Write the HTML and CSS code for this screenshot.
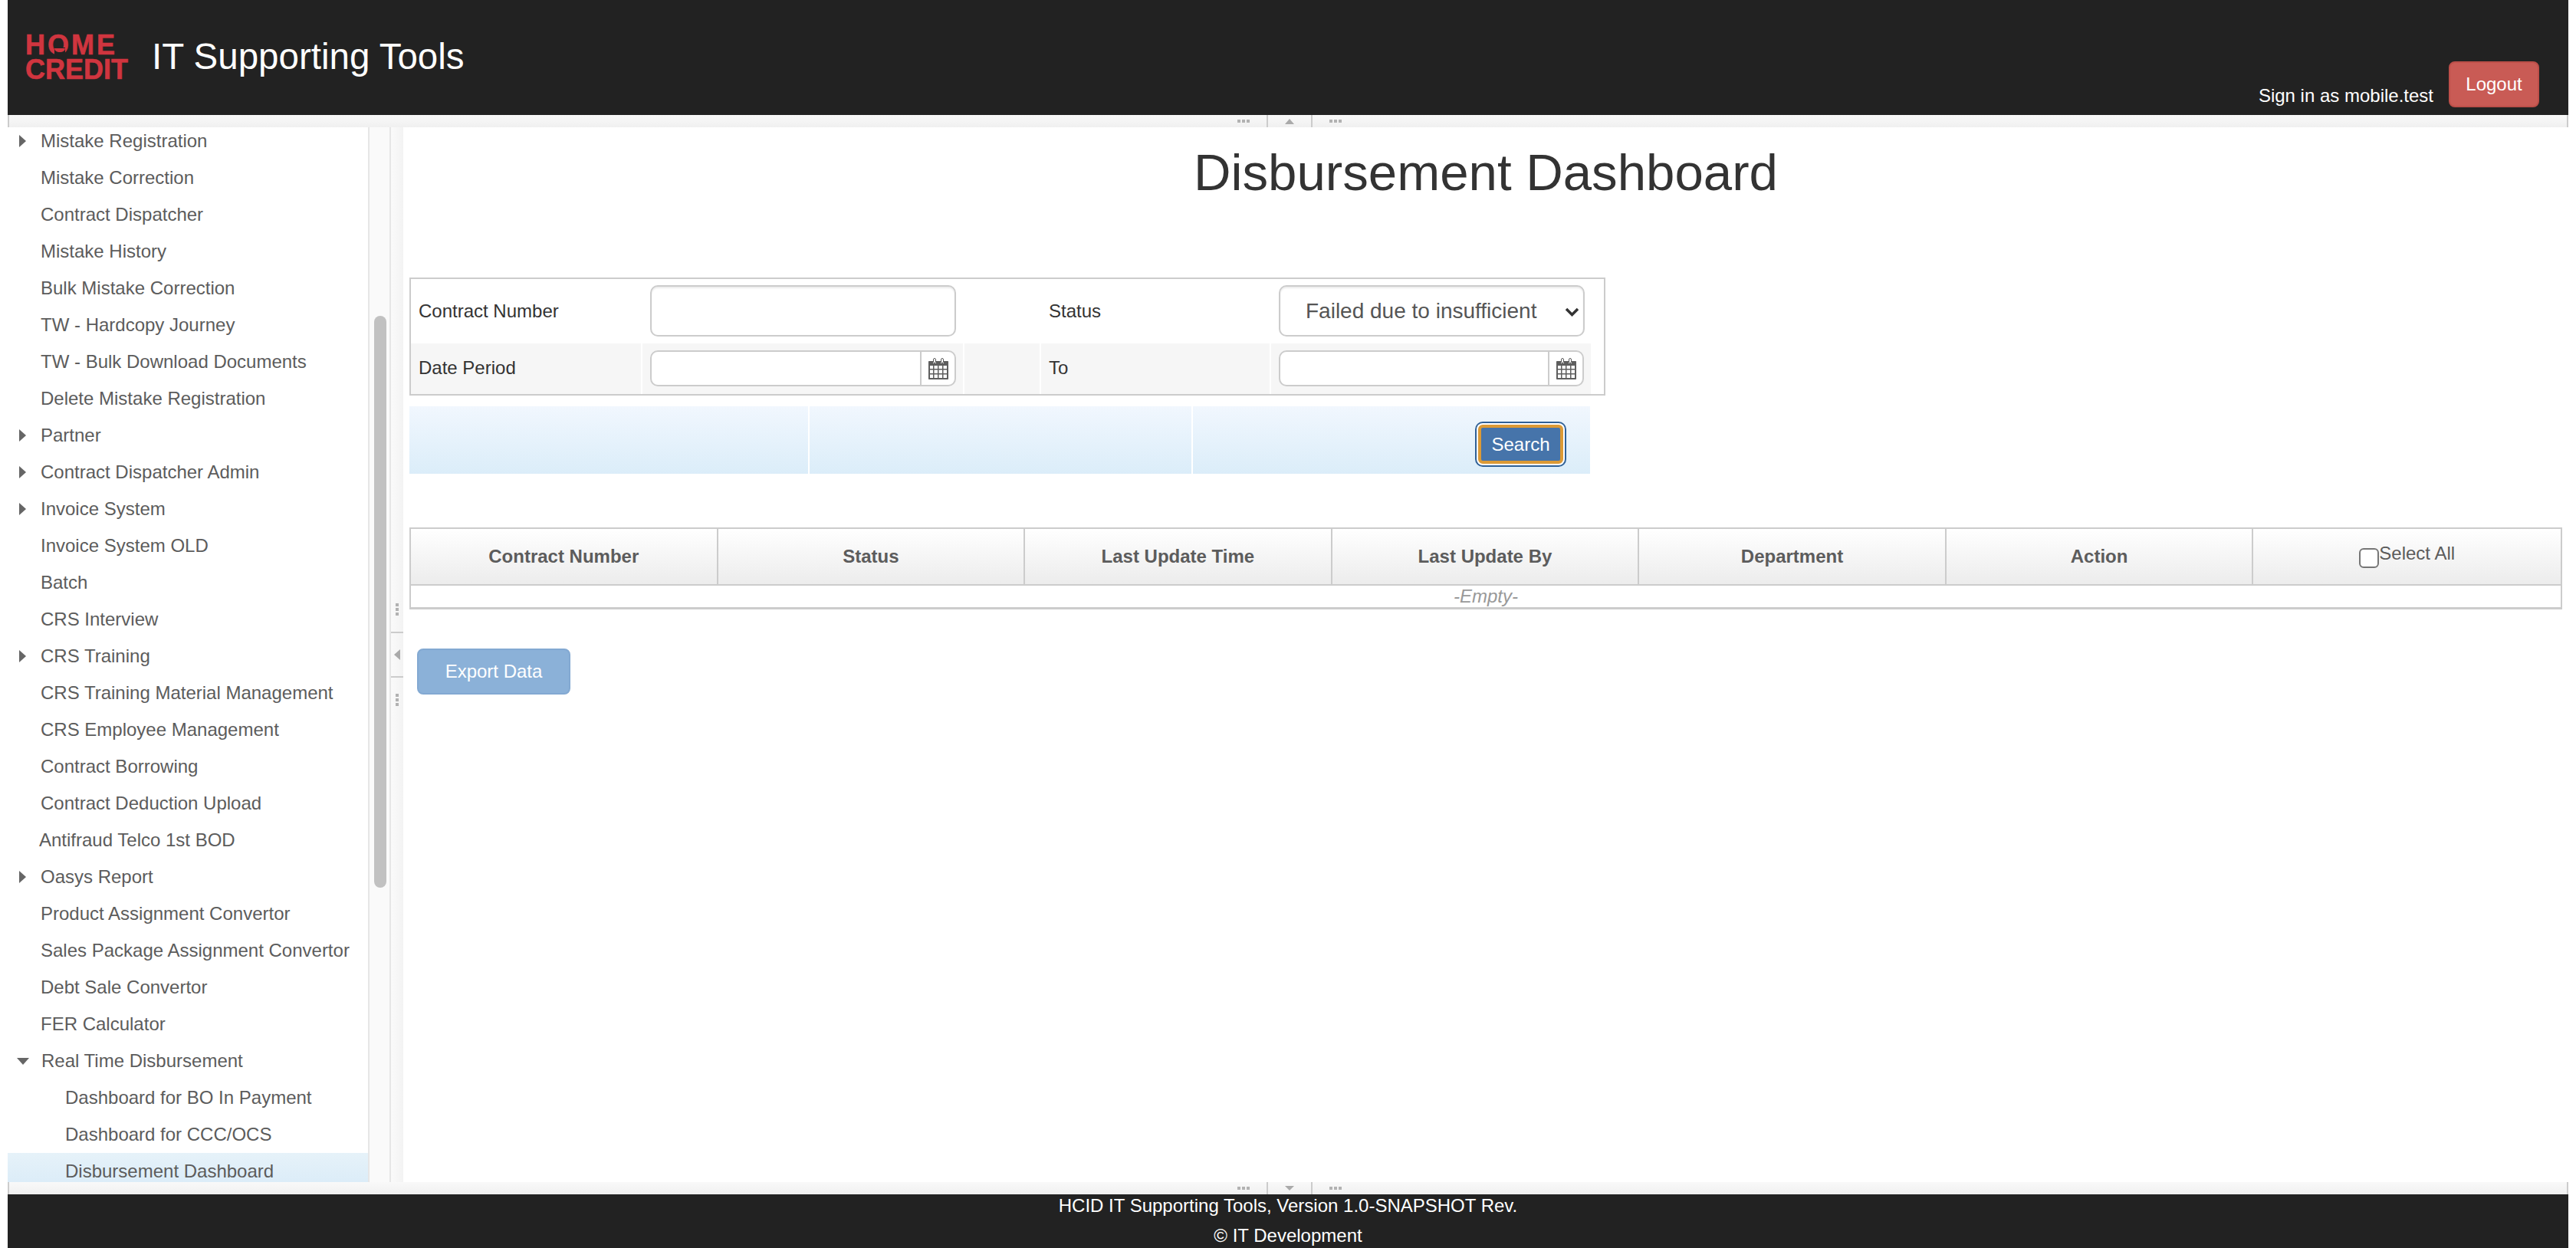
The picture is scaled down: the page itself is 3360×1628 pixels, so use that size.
FILE: index.html
```html
<!DOCTYPE html>
<html>

<head>
    <title>IT Supporting Tools</title>
    <link rel="stylesheet" href="styles.css">
</head>

<body>
    <div class="page">
        <div class="topbar">
            <div class="logo">
                <div class="logo-word">HOME CREDIT</div>
                <svg class="logo-roof" width="20" height="12" viewBox="0 0 20 12">
                    <rect x="3" y="0" width="14" height="12" fill="#222222" />
                    <path d="M3 1H17C17 4 14 6 10 6C6 6 3 4 3 1Z" fill="#d0353f" />
                </svg>
            </div>
            <div class="app-title">IT Supporting Tools</div>
            <div class="user-box">
                <span class="user-name">Sign in as mobile.test</span>
                <button class="btn-logout">Logout</button>
            </div>
        </div>

        <div class="resizer-h">
            <span class="grip"></span>
            <span class="toggler"><span class="tri-up"></span></span>
            <span class="grip"></span>
        </div>

        <div class="middle">
            <div class="sidebar">
                <ul class="menu">
                    <li><span class="slot"><span class="tri-right"></span></span>Mistake Registration</li>
                    <li><span class="slot"></span>Mistake Correction</li>
                    <li><span class="slot"></span>Contract Dispatcher</li>
                    <li><span class="slot"></span>Mistake History</li>
                    <li><span class="slot"></span>Bulk Mistake Correction</li>
                    <li><span class="slot"></span>TW - Hardcopy Journey</li>
                    <li><span class="slot"></span>TW - Bulk Download Documents</li>
                    <li><span class="slot"></span>Delete Mistake Registration</li>
                    <li><span class="slot"><span class="tri-right"></span></span>Partner</li>
                    <li><span class="slot"><span class="tri-right"></span></span>Contract Dispatcher Admin</li>
                    <li><span class="slot"><span class="tri-right"></span></span>Invoice System</li>
                    <li><span class="slot"></span>Invoice System OLD</li>
                    <li><span class="slot"></span>Batch</li>
                    <li><span class="slot"></span>CRS Interview</li>
                    <li><span class="slot"><span class="tri-right"></span></span>CRS Training</li>
                    <li><span class="slot"></span>CRS Training Material Management</li>
                    <li><span class="slot"></span>CRS Employee Management</li>
                    <li><span class="slot"></span>Contract Borrowing</li>
                    <li><span class="slot"></span>Contract Deduction Upload</li>
                    <li class="item-tight"><span class="slot"></span>Antifraud Telco 1st BOD</li>
                    <li><span class="slot"><span class="tri-right"></span></span>Oasys Report</li>
                    <li><span class="slot"></span>Product Assignment Convertor</li>
                    <li><span class="slot"></span>Sales Package Assignment Convertor</li>
                    <li><span class="slot"></span>Debt Sale Convertor</li>
                    <li><span class="slot"></span>FER Calculator</li>
                    <li><span class="slot"><span class="tri-down"></span></span>Real Time Disbursement</li>
                    <li class="sub-item">Dashboard for BO In Payment</li>
                    <li class="sub-item">Dashboard for CCC/OCS</li>
                    <li class="sub-item selected">Disbursement Dashboard</li>
                </ul>
            </div>
            <div class="scroll-track">
                <div class="scroll-thumb"></div>
            </div>
            <div class="resizer-v">
                <span class="grip-v"></span>
                <span class="toggler-v"><span class="tri-left"></span></span>
                <span class="grip-v"></span>
            </div>

            <div class="main">
                <h1>Disbursement Dashboard</h1>

                <div class="filter">
                    <div class="cell">Contract Number</div>
                    <div class="cell cell-field"><input type="text" class="input-text"></div>
                    <div class="cell"></div>
                    <div class="cell">Status</div>
                    <div class="cell cell-field">
                        <div class="select-wrap">
                            <select class="input-select">
                                <option>Failed due to insufficient</option>
                            </select>
                            <svg class="select-arrow" width="19" height="12" viewBox="0 0 19 12">
                                <path d="M2 2L9.5 9.5L17 2" fill="none" stroke="#333333" stroke-width="3.5" />
                            </svg>
                        </div>
                    </div>

                    <div class="cell cell-alt"><span class="lift">Date Period</span></div>
                    <div class="cell cell-alt cell-field">
                        <div class="date-group">
                            <input type="text" class="input-date">
                            <span class="date-addon">
                                <svg width="26" height="28" viewBox="0 0 26 28">
                                    <path d="M1 4H6V7H10V4H16V7H20V4H25C25.6 4 26 4.4 26 5V27C26 27.6 25.6 28 25 28H1C0.4 28 0 27.6 0 27V5C0 4.4 0.4 4 1 4Z" fill="#5e5e5e" />
                                    <rect x="6.5" y="0.5" width="3" height="6" rx="1.5" fill="#ffffff" stroke="#5e5e5e" />
                                    <rect x="16.5" y="0.5" width="3" height="6" rx="1.5" fill="#ffffff" stroke="#5e5e5e" />
                                    <path d="M2 10H6V14H2ZM7.5 10H12V14H7.5ZM13.5 10H18V14H13.5ZM19.5 10H24V14H19.5ZM2 15.5H6V20H2ZM7.5 15.5H12V20H7.5ZM13.5 15.5H18V20H13.5ZM19.5 15.5H24V20H19.5ZM2 21.5H6V26H2ZM7.5 21.5H12V26H7.5ZM13.5 21.5H18V26H13.5ZM19.5 21.5H24V26H19.5Z" fill="#ffffff" />
                                </svg>
                            </span>
                        </div>
                    </div>
                    <div class="cell cell-alt"></div>
                    <div class="cell cell-alt"><span class="lift">To</span></div>
                    <div class="cell cell-alt cell-field">
                        <div class="date-group">
                            <input type="text" class="input-date">
                            <span class="date-addon">
                                <svg width="26" height="28" viewBox="0 0 26 28">
                                    <path d="M1 4H6V7H10V4H16V7H20V4H25C25.6 4 26 4.4 26 5V27C26 27.6 25.6 28 25 28H1C0.4 28 0 27.6 0 27V5C0 4.4 0.4 4 1 4Z" fill="#5e5e5e" />
                                    <rect x="6.5" y="0.5" width="3" height="6" rx="1.5" fill="#ffffff" stroke="#5e5e5e" />
                                    <rect x="16.5" y="0.5" width="3" height="6" rx="1.5" fill="#ffffff" stroke="#5e5e5e" />
                                    <path d="M2 10H6V14H2ZM7.5 10H12V14H7.5ZM13.5 10H18V14H13.5ZM19.5 10H24V14H19.5ZM2 15.5H6V20H2ZM7.5 15.5H12V20H7.5ZM13.5 15.5H18V20H13.5ZM19.5 15.5H24V20H19.5ZM2 21.5H6V26H2ZM7.5 21.5H12V26H7.5ZM13.5 21.5H18V26H13.5ZM19.5 21.5H24V26H19.5Z" fill="#ffffff" />
                                </svg>
                            </span>
                        </div>
                    </div>
                </div>

                <div class="search-bar">
                    <div class="search-cell"></div>
                    <div class="search-cell"></div>
                    <div class="search-cell search-action">
                        <button class="btn-search">Search</button>
                    </div>
                </div>

                <table class="result">
                    <thead>
                        <tr>
                            <th>Contract Number</th>
                            <th>Status</th>
                            <th>Last Update Time</th>
                            <th>Last Update By</th>
                            <th>Department</th>
                            <th>Action</th>
                            <th class="th-select">
                                <label class="select-all"><input type="checkbox" class="check"><span>Select All</span></label>
                            </th>
                        </tr>
                    </thead>
                    <tbody>
                        <tr>
                            <td colspan="7">-Empty-</td>
                        </tr>
                    </tbody>
                </table>

                <button class="btn-export">Export Data</button>
            </div>
        </div>

        <div class="resizer-h">
            <span class="grip"></span>
            <span class="toggler"><span class="tri-down-small"></span></span>
            <span class="grip"></span>
        </div>

        <div class="footer">
            <div class="footer-text">
                <div>HCID IT Supporting Tools, Version 1.0-SNAPSHOT Rev.</div>
                <div>© IT Development</div>
            </div>
        </div>
    </div>
</body>

</html>
```

FILE: styles.css
```css
* {
    box-sizing: border-box;
}

html,
body {
    height: 100%;
    margin: 0;
}

body {
    font-family: "Liberation Sans", Arial, sans-serif;
    font-size: 24px;
    color: #333;
    background-color: #fff;
    overflow: hidden;
}

.page {
    display: flex;
    flex-direction: column;
    height: 100%;
    padding: 0 10px;
}

/* header */
.topbar {
    display: flex;
    flex: 0 0 150px;
    background-color: #222;
    color: #fff;
}

.logo {
    position: relative;
    width: 165px;
    margin: 43px 0 0 23px;
    color: #d0353f;
}

.logo-word {
    font-size: 36px;
    font-weight: bold;
    line-height: 32px;
    -webkit-text-stroke: 0.6px #d0353f;
}

.logo-word::first-line {
    letter-spacing: 3px;
}

.logo-roof {
    position: absolute;
    top: 19px;
    left: 35px;
}

.app-title {
    margin-top: 46px;
    font-size: 47.5px;
    line-height: 56px;
}

.user-box {
    display: flex;
    align-items: flex-end;
    margin-left: auto;
    padding: 80px 38px 10px 0;
}

.user-name {
    margin-right: 20px;
    margin-bottom: -1px;
    line-height: 32px;
}

.btn-logout {
    width: 118px;
    height: 60px;
    padding: 0;
    background-color: #c95b55;
    color: #fff;
    font: inherit;
    border: 2px solid #bd4f49;
    border-radius: 8px;
}

/* splitter bars */
.resizer-h {
    display: flex;
    flex: 0 0 16px;
    align-items: center;
    justify-content: center;
    padding-left: 4px;
    background: linear-gradient(#f9f9f9, #f0f0f0);
    border-left: 2px solid #ccc;
    border-right: 2px solid #ccc;
}

.grip {
    width: 16px;
    height: 4px;
    background: repeating-linear-gradient(to right, #b2b2b2 0 4px, transparent 4px 6px);
}

.toggler {
    display: flex;
    align-items: center;
    justify-content: center;
    width: 60px;
    height: 16px;
    margin: 0 22px;
    border-left: 2px solid #ccc;
    border-right: 2px solid #ccc;
}

.tri-up {
    border-left: 6px solid transparent;
    border-right: 6px solid transparent;
    border-bottom: 7px solid #aaa;
}

.tri-down-small {
    border-left: 6px solid transparent;
    border-right: 6px solid transparent;
    border-top: 6px solid #aaa;
}

.resizer-v {
    display: flex;
    flex: 0 0 16px;
    flex-direction: column;
    align-items: center;
    justify-content: center;
    background: linear-gradient(to right, #fafafa, #f3f3f3);
}

.grip-v {
    width: 4px;
    height: 16px;
    background: repeating-linear-gradient(#b2b2b2 0 4px, transparent 4px 6px);
}

.toggler-v {
    display: flex;
    align-items: center;
    justify-content: center;
    width: 16px;
    height: 60px;
    margin: 21px 0;
    border-top: 2px solid #ccc;
    border-bottom: 2px solid #ccc;
}

.tri-left {
    border-top: 7px solid transparent;
    border-bottom: 7px solid transparent;
    border-right: 8px solid #aaa;
}

/* side menu */
.middle {
    display: flex;
    flex: 1;
    min-height: 0;
}

.sidebar {
    flex: 0 0 472px;
    overflow: hidden;
    border-right: 2px solid #e6e6e6;
    color: #5c5c5c;
}

.menu {
    margin: -6px 0 0;
    padding: 0;
    list-style: none;
}

.menu li {
    display: flex;
    align-items: center;
    height: 48px;
    padding-left: 12px;
    white-space: nowrap;
}

.slot {
    display: flex;
    flex: 0 0 15px;
    align-items: center;
    justify-content: center;
    margin-right: 16px;
}

.menu .item-tight .slot {
    margin-right: 14px;
}

.menu .sub-item {
    padding-left: 75px;
}

.menu .selected {
    background: linear-gradient(#e6f2f9, #d9ebf8);
}

.tri-right {
    border-top: 8px solid transparent;
    border-bottom: 8px solid transparent;
    border-left: 9px solid #666;
}

.tri-down {
    border-left: 8px solid transparent;
    border-right: 8px solid transparent;
    border-top: 9px solid #666;
}

.scroll-track {
    flex: 0 0 28px;
    padding: 246px 0 0 6px;
    background-color: #fafafa;
    border-right: 2px solid #e6e6e6;
}

.scroll-thumb {
    width: 16px;
    height: 746px;
    background-color: #c1c1c1;
    border-radius: 8px;
}

/* content */
.main {
    flex: 1;
    min-width: 0;
}

h1 {
    margin: 20px 0 0;
    font-size: 67.2px;
    font-weight: normal;
    line-height: 78px;
    text-align: center;
}

.filter {
    display: grid;
    grid-template-columns: 300px 418px 98px 298px 417px;
    grid-template-rows: 84px 66px;
    column-gap: 2px;
    width: 1560px;
    margin: 98px 0 0 8px;
    border: 2px solid #ccc;
}

.cell {
    display: flex;
    align-items: center;
    padding-left: 10px;
}

.cell-alt {
    background-color: #f6f6f6;
}

.lift {
    margin-bottom: 3px;
}

.cell-field {
    padding-left: 10px;
    padding-right: 9px;
}

.input-text,
.input-select {
    width: 399px;
    height: 67px;
    background-color: #fff;
    border: 2px solid #ccc;
    border-radius: 10px;
    box-shadow: inset 0 2px 2px rgba(0, 0, 0, 0.08);
}

.input-text {
    margin-bottom: 1px;
}

.select-wrap {
    position: relative;
    display: flex;
    margin-bottom: 1px;
}

.input-select {
    padding: 0 50px 0 33px;
    appearance: none;
    color: #555;
    font-family: inherit;
    font-size: 28px;
}

.select-arrow {
    position: absolute;
    top: 29px;
    right: 7px;
    pointer-events: none;
}

.date-group {
    display: flex;
    width: 399px;
    height: 47px;
    margin-bottom: 1px;
    background-color: #fff;
    border: 2px solid #ccc;
    border-radius: 10px;
}

.input-date {
    flex: 1;
    min-width: 0;
    background: transparent;
    border: none;
}

.date-addon {
    display: flex;
    flex: 0 0 45px;
    align-items: center;
    justify-content: center;
    border-left: 2px solid #ccc;
}

.search-bar {
    display: grid;
    grid-template-columns: 520px 498px 518px;
    column-gap: 2px;
    width: 1540px;
    height: 88px;
    margin: 14px 0 0 8px;
}

.search-cell {
    background: linear-gradient(#f1f7fe, #dbedf9);
}

.search-action {
    display: flex;
    justify-content: flex-end;
    padding: 24px 35px 0 0;
}

.btn-search {
    width: 111px;
    height: 51px;
    padding: 0;
    background-color: #4674aa;
    color: #fff;
    font: inherit;
    border: 4px solid #dc9a36;
    border-radius: 6px;
    box-shadow: 0 0 0 2px #fff, 0 0 0 4px #2f6096;
}

.result {
    width: 2808px;
    margin: 70px 0 0 8px;
    table-layout: fixed;
    border-spacing: 0;
    border: 2px solid #ccc;
    border-bottom-width: 3px;
}

.result th {
    height: 74px;
    padding: 0;
    background: linear-gradient(#fff, #ececec);
    color: #5c5c5c;
    font-size: 24px;
    border-right: 2px solid #ccc;
    border-bottom: 2px solid #ccc;
}

.result th:last-child {
    border-right: none;
}

.result .th-select {
    font-weight: normal;
}

.select-all {
    display: inline-flex;
    align-items: flex-start;
    padding-top: 2px;
}

.select-all span {
    line-height: 28px;
}

.check {
    width: 26px;
    height: 26px;
    margin: 7px 0 0;
    appearance: none;
    background-color: #fff;
    border: 2px solid #767676;
    border-radius: 6px;
}

.result td {
    height: 28px;
    padding: 0;
    color: #999;
    font-style: italic;
    line-height: 28px;
    text-align: center;
}

.btn-export {
    display: block;
    width: 200px;
    height: 60px;
    margin: 51px 0 0 18px;
    padding: 0;
    background-color: #8bb1d8;
    color: #fff;
    font: inherit;
    border: 2px solid #83a9d2;
    border-radius: 8px;
}

/* footer */
.footer {
    flex: 0 0 70px;
    overflow: hidden;
    background-color: #222;
    color: #fff;
    line-height: 39px;
    text-align: center;
}

.footer-text {
    margin-top: -5px;
}
```
